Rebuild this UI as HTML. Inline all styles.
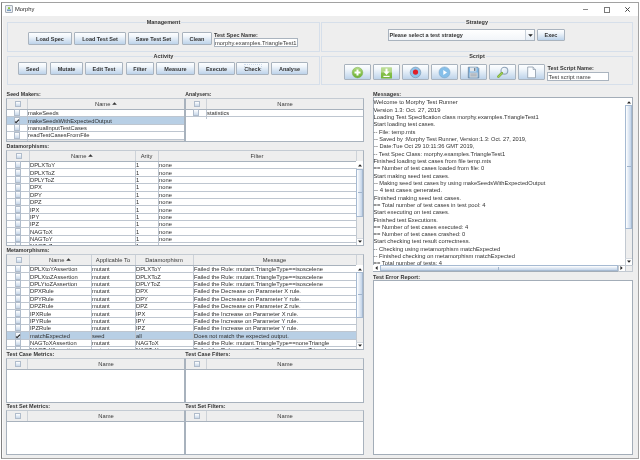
<!DOCTYPE html><html><head><meta charset="utf-8"><style>html,body{margin:0;padding:0;}body{width:640px;height:460px;overflow:hidden;background:#fff;position:relative;font-family:"Liberation Sans",sans-serif;}</style></head><body><div style="position:absolute;left:0;top:0;width:640px;height:460px;will-change:transform;">
<div style="position:absolute;left:1px;top:2px;width:636px;height:455px;border:1px solid #a2a2a2;border-left-color:#808080;background:#eeeeee;"></div>
<div style="position:absolute;left:2px;top:3px;width:636px;height:13px;background:#ffffff;"></div>
<div style="position:absolute;left:2px;top:16px;width:1px;height:441px;background:#fafafa;"></div>
<div style="position:absolute;left:5px;top:5px;width:6px;height:6px;border:1px solid #a5adb6;border-radius:1px;background:#e9edf1;"></div>
<svg style="position:absolute;left:6px;top:6px" width="6" height="6" viewBox="0 0 6 6"><path d="M2 1.2H4V3H2Z" fill="#8cc63e"/><path d="M1 3.4H5V5H1Z" fill="#7a9cc0"/></svg>
<div style="position:absolute;left:15px;top:5px;height:8px;line-height:8px;font-size:5.8px;color:#2a2a2a;white-space:nowrap;">Morphy</div>
<div style="position:absolute;left:583px;top:9px;width:5px;height:1px;background:#8a8a8a;"></div>
<div style="position:absolute;left:604px;top:7px;width:4px;height:4px;border:1px solid #7a7a7a;"></div>
<svg style="position:absolute;left:625px;top:7px" width="5" height="5" viewBox="0 0 5 5"><path d="M0.3 0.3L4.7 4.7M4.7 0.3L0.3 4.7" stroke="#444" stroke-width="1"/></svg>
<div style="position:absolute;left:7px;top:22px;width:311px;height:28px;border:1px solid #d6dfea;"></div>
<div style="position:absolute;left:63.5px;width:200px;top:18px;height:8px;line-height:8px;text-align:center;font-size:5.5px;font-weight:bold;color:#333333;white-space:nowrap;"><span style="background:#eeeeee;padding:0 1px;">Management</span></div>
<div style="position:absolute;left:321px;top:22px;width:310px;height:28px;border:1px solid #d6dfea;"></div>
<div style="position:absolute;left:377.0px;width:200px;top:18px;height:8px;line-height:8px;text-align:center;font-size:5.5px;font-weight:bold;color:#333333;white-space:nowrap;"><span style="background:#eeeeee;padding:0 1px;">Strategy</span></div>
<div style="position:absolute;left:7px;top:56px;width:311px;height:27px;border:1px solid #d6dfea;"></div>
<div style="position:absolute;left:63.5px;width:200px;top:52px;height:8px;line-height:8px;text-align:center;font-size:5.5px;font-weight:bold;color:#333333;white-space:nowrap;"><span style="background:#eeeeee;padding:0 1px;">Activity</span></div>
<div style="position:absolute;left:321px;top:56px;width:310px;height:27px;border:1px solid #d6dfea;"></div>
<div style="position:absolute;left:377.0px;width:200px;top:52px;height:8px;line-height:8px;text-align:center;font-size:5.5px;font-weight:bold;color:#333333;white-space:nowrap;"><span style="background:#eeeeee;padding:0 1px;">Script</span></div>
<div style="position:absolute;left:28px;top:32px;width:42px;height:11px;border:1px solid #a9b3be;border-radius:1px;background:linear-gradient(#fdfeff 0%,#f1f6fb 30%,#bdd3ea 100%);"></div>
<div style="position:absolute;left:-50.0px;width:200px;top:34.5px;height:8px;line-height:8px;text-align:center;font-size:5.5px;font-weight:bold;color:#333;white-space:nowrap;"><span style="">Load Spec</span></div>
<div style="position:absolute;left:74px;top:32px;width:50px;height:11px;border:1px solid #a9b3be;border-radius:1px;background:linear-gradient(#fdfeff 0%,#f1f6fb 30%,#bdd3ea 100%);"></div>
<div style="position:absolute;left:0.0px;width:200px;top:34.5px;height:8px;line-height:8px;text-align:center;font-size:5.5px;font-weight:bold;color:#333;white-space:nowrap;"><span style="">Load Test Set</span></div>
<div style="position:absolute;left:128px;top:32px;width:49px;height:11px;border:1px solid #a9b3be;border-radius:1px;background:linear-gradient(#fdfeff 0%,#f1f6fb 30%,#bdd3ea 100%);"></div>
<div style="position:absolute;left:53.5px;width:200px;top:34.5px;height:8px;line-height:8px;text-align:center;font-size:5.5px;font-weight:bold;color:#333;white-space:nowrap;"><span style="">Save Test Set</span></div>
<div style="position:absolute;left:182px;top:32px;width:28px;height:11px;border:1px solid #a9b3be;border-radius:1px;background:linear-gradient(#fdfeff 0%,#f1f6fb 30%,#bdd3ea 100%);"></div>
<div style="position:absolute;left:97.0px;width:200px;top:34.5px;height:8px;line-height:8px;text-align:center;font-size:5.5px;font-weight:bold;color:#333;white-space:nowrap;"><span style="">Clean</span></div>
<div style="position:absolute;left:214px;top:30.5px;height:8px;line-height:8px;font-size:5.5px;font-weight:bold;color:#333333;white-space:nowrap;">Test Spec Name:</div>
<div style="position:absolute;left:214px;top:38px;width:82px;height:7px;border:1px solid #aab4bf;background:#fff;"></div>
<div style="position:absolute;left:215px;top:38.7px;height:8px;line-height:8px;font-size:5.8px;color:#3a3a3a;white-space:nowrap;">morphy.examples.TriangleTest1</div>
<div style="position:absolute;left:388px;top:29px;width:145px;height:10px;border:1px solid #a9b3be;background:linear-gradient(#ffffff,#f2f5f9);"></div>
<div style="position:absolute;left:525px;top:30px;width:1px;height:10px;background:#c9d1da;"></div>
<div style="position:absolute;left:526px;top:30px;width:8px;height:10px;background:linear-gradient(#ffffff,#e4ecf5);"></div>
<svg style="position:absolute;left:527.5px;top:33.5px" width="5" height="3" viewBox="0 0 5 3"><path d="M0.2 0.2H4.8L2.5 2.8Z" fill="#222"/></svg>
<div style="position:absolute;left:389.5px;top:31px;height:8px;line-height:8px;font-size:5.5px;font-weight:bold;color:#333333;white-space:nowrap;">Please select a test strategy</div>
<div style="position:absolute;left:537px;top:29px;width:26px;height:10px;border:1px solid #a9b3be;border-radius:1px;background:linear-gradient(#fdfeff 0%,#f1f6fb 30%,#bdd3ea 100%);"></div>
<div style="position:absolute;left:451.0px;width:200px;top:31.0px;height:8px;line-height:8px;text-align:center;font-size:5.5px;font-weight:bold;color:#333;white-space:nowrap;"><span style="">Exec</span></div>
<div style="position:absolute;left:18px;top:62px;width:27px;height:11px;border:1px solid #a9b3be;border-radius:1px;background:linear-gradient(#fdfeff 0%,#f1f6fb 30%,#bdd3ea 100%);"></div>
<div style="position:absolute;left:-67.5px;width:200px;top:64.5px;height:8px;line-height:8px;text-align:center;font-size:5.5px;font-weight:bold;color:#333;white-space:nowrap;"><span style="">Seed</span></div>
<div style="position:absolute;left:50px;top:62px;width:31px;height:11px;border:1px solid #a9b3be;border-radius:1px;background:linear-gradient(#fdfeff 0%,#f1f6fb 30%,#bdd3ea 100%);"></div>
<div style="position:absolute;left:-33.5px;width:200px;top:64.5px;height:8px;line-height:8px;text-align:center;font-size:5.5px;font-weight:bold;color:#333;white-space:nowrap;"><span style="">Mutate</span></div>
<div style="position:absolute;left:85px;top:62px;width:36px;height:11px;border:1px solid #a9b3be;border-radius:1px;background:linear-gradient(#fdfeff 0%,#f1f6fb 30%,#bdd3ea 100%);"></div>
<div style="position:absolute;left:4.0px;width:200px;top:64.5px;height:8px;line-height:8px;text-align:center;font-size:5.5px;font-weight:bold;color:#333;white-space:nowrap;"><span style="">Edit Test</span></div>
<div style="position:absolute;left:126px;top:62px;width:26px;height:11px;border:1px solid #a9b3be;border-radius:1px;background:linear-gradient(#fdfeff 0%,#f1f6fb 30%,#bdd3ea 100%);"></div>
<div style="position:absolute;left:40.0px;width:200px;top:64.5px;height:8px;line-height:8px;text-align:center;font-size:5.5px;font-weight:bold;color:#333;white-space:nowrap;"><span style="">Filter</span></div>
<div style="position:absolute;left:156px;top:62px;width:37px;height:11px;border:1px solid #a9b3be;border-radius:1px;background:linear-gradient(#fdfeff 0%,#f1f6fb 30%,#bdd3ea 100%);"></div>
<div style="position:absolute;left:75.5px;width:200px;top:64.5px;height:8px;line-height:8px;text-align:center;font-size:5.5px;font-weight:bold;color:#333;white-space:nowrap;"><span style="">Measure</span></div>
<div style="position:absolute;left:198px;top:62px;width:35px;height:11px;border:1px solid #a9b3be;border-radius:1px;background:linear-gradient(#fdfeff 0%,#f1f6fb 30%,#bdd3ea 100%);"></div>
<div style="position:absolute;left:116.5px;width:200px;top:64.5px;height:8px;line-height:8px;text-align:center;font-size:5.5px;font-weight:bold;color:#333;white-space:nowrap;"><span style="">Execute</span></div>
<div style="position:absolute;left:236px;top:62px;width:31px;height:11px;border:1px solid #a9b3be;border-radius:1px;background:linear-gradient(#fdfeff 0%,#f1f6fb 30%,#bdd3ea 100%);"></div>
<div style="position:absolute;left:152.5px;width:200px;top:64.5px;height:8px;line-height:8px;text-align:center;font-size:5.5px;font-weight:bold;color:#333;white-space:nowrap;"><span style="">Check</span></div>
<div style="position:absolute;left:271px;top:62px;width:35px;height:11px;border:1px solid #a9b3be;border-radius:1px;background:linear-gradient(#fdfeff 0%,#f1f6fb 30%,#bdd3ea 100%);"></div>
<div style="position:absolute;left:189.5px;width:200px;top:64.5px;height:8px;line-height:8px;text-align:center;font-size:5.5px;font-weight:bold;color:#333;white-space:nowrap;"><span style="">Analyse</span></div>
<div style="position:absolute;left:244px;top:64px;width:16px;height:7px;border:1px dotted #cbd8e8;"></div>
<div style="position:absolute;left:344px;top:64px;width:25px;height:14px;border:1px solid #a9b3be;border-radius:1px;background:linear-gradient(#fdfeff 0%,#f1f6fb 30%,#bdd3ea 100%);"></div>
<div style="position:absolute;left:351px;top:64.6px;width:13px;height:13px;"><svg width="13" height="13" viewBox="0 0 13 13"><defs><linearGradient id="g1" x1="0" y1="0" x2="0" y2="1"><stop offset="0" stop-color="#b9dd8f"/><stop offset="0.45" stop-color="#8cc552"/><stop offset="1" stop-color="#6fb03a"/></linearGradient></defs><circle cx="6.5" cy="6.6" r="5.3" fill="url(#g1)" stroke="#79ad4a" stroke-width="0.5"/><path d="M6.5 3.6V9.6M3.5 6.6H9.5" stroke="#fff" stroke-width="2"/></svg></div>
<div style="position:absolute;left:373px;top:64px;width:25px;height:14px;border:1px solid #a9b3be;border-radius:1px;background:linear-gradient(#fdfeff 0%,#f1f6fb 30%,#bdd3ea 100%);"></div>
<div style="position:absolute;left:380px;top:64.6px;width:13px;height:13px;"><svg width="13" height="13" viewBox="0 0 13 13"><defs><linearGradient id="g2" x1="0" y1="0" x2="0" y2="1"><stop offset="0" stop-color="#bcdd98"/><stop offset="0.45" stop-color="#b0d685"/><stop offset="0.5" stop-color="#86c04a"/><stop offset="1" stop-color="#78b63c"/></linearGradient></defs><rect x="1" y="1.2" width="11" height="11.3" rx="0.6" fill="url(#g2)"/><path d="M6.5 2.6V6.5" stroke="#fff" stroke-width="2"/><path d="M3.4 5.6H9.6L6.5 8.9Z" fill="#fff"/><path d="M3.4 10.4H9.6" stroke="#fff" stroke-width="1.2"/></svg></div>
<div style="position:absolute;left:402px;top:64px;width:25px;height:14px;border:1px solid #a9b3be;border-radius:1px;background:linear-gradient(#fdfeff 0%,#f1f6fb 30%,#bdd3ea 100%);"></div>
<div style="position:absolute;left:409px;top:64.6px;width:13px;height:13px;"><svg width="13" height="13" viewBox="0 0 13 13"><circle cx="6.5" cy="6.4" r="5.3" fill="#8fc3ea" stroke="#7d98b3" stroke-width="0.7"/><circle cx="6.5" cy="6.1" r="2.6" fill="#e0202a"/></svg></div>
<div style="position:absolute;left:431px;top:64px;width:25px;height:14px;border:1px solid #a9b3be;border-radius:1px;background:linear-gradient(#fdfeff 0%,#f1f6fb 30%,#bdd3ea 100%);"></div>
<div style="position:absolute;left:438px;top:64.6px;width:13px;height:13px;"><svg width="13" height="13" viewBox="0 0 13 13"><circle cx="6.5" cy="6.4" r="5.5" fill="#86bfe9" stroke="#7fa6c8" stroke-width="0.6"/><path d="M5.3 3.9L9 6.4L5.3 8.9Z" fill="#fff"/></svg></div>
<div style="position:absolute;left:460px;top:64px;width:25px;height:14px;border:1px solid #a9b3be;border-radius:1px;background:linear-gradient(#fdfeff 0%,#f1f6fb 30%,#bdd3ea 100%);"></div>
<div style="position:absolute;left:467px;top:64.6px;width:13px;height:13px;"><svg width="13" height="13" viewBox="0 0 13 13"><path d="M1.3 1.2H10.6L11.8 2.4V11.9H1.3Z" fill="#7db6e6" stroke="#64788e" stroke-width="0.7"/><rect x="3" y="1.5" width="6.4" height="4" fill="#e4e8ec"/><rect x="7" y="2.1" width="1.4" height="2.8" fill="#6c7c8c"/><rect x="2.6" y="6.5" width="8" height="5.1" fill="#cdd2d7"/><path d="M3.5 8.1H9.7M3.5 9.8H9.7" stroke="#959ea7" stroke-width="0.7"/></svg></div>
<div style="position:absolute;left:489px;top:64px;width:25px;height:14px;border:1px solid #a9b3be;border-radius:1px;background:linear-gradient(#fdfeff 0%,#f1f6fb 30%,#bdd3ea 100%);"></div>
<div style="position:absolute;left:496px;top:64.6px;width:13px;height:13px;"><svg width="13" height="13" viewBox="0 0 13 13"><defs><linearGradient id="g3" x1="0" y1="0" x2="1" y2="1"><stop offset="0" stop-color="#ffffff"/><stop offset="1" stop-color="#c9ddf0"/></linearGradient></defs><circle cx="8.4" cy="4.7" r="3.4" fill="url(#g3)" stroke="#8fa3b8" stroke-width="1.1"/><path d="M5.9 7.2L2.4 10.7" stroke="#6f9a3a" stroke-width="2.6" stroke-linecap="round"/><path d="M5.9 7.2L2.4 10.7" stroke="#9fd052" stroke-width="1.6" stroke-linecap="round"/></svg></div>
<div style="position:absolute;left:518px;top:64px;width:25px;height:14px;border:1px solid #a9b3be;border-radius:1px;background:linear-gradient(#fdfeff 0%,#f1f6fb 30%,#bdd3ea 100%);"></div>
<div style="position:absolute;left:525px;top:64.6px;width:13px;height:13px;"><svg width="13" height="13" viewBox="0 0 13 13"><path d="M2.7 1H8.1L10.5 3.5V11.8H2.7Z" fill="#fbfdff" stroke="#8d9aa9" stroke-width="0.8"/><path d="M8.1 1V3.5H10.5" fill="#dfe6ee" stroke="#8d9aa9" stroke-width="0.7"/></svg></div>
<div style="position:absolute;left:547.5px;top:63.8px;height:8px;line-height:8px;font-size:5.5px;font-weight:bold;color:#333333;white-space:nowrap;">Test Script Name:</div>
<div style="position:absolute;left:547px;top:72px;width:60px;height:7px;border:1px solid #aab4bf;background:#fff;"></div>
<div style="position:absolute;left:548.5px;top:72.6px;height:8px;line-height:8px;font-size:5.8px;color:#3a3a3a;white-space:nowrap;">Test script name</div>
<div style="position:absolute;left:6.6px;top:90px;height:8px;line-height:8px;font-size:5.32px;font-weight:bold;color:#333333;white-space:nowrap;">Seed Makers:</div>
<div style="position:absolute;left:6px;top:98px;width:177px;height:42px;border:1px solid #a8b2bd;border-top-color:#c4cbd3;background:#e4e4e4;overflow:hidden;">
<div style="position:absolute;left:0px;top:0px;width:177px;height:10px;background:#eeeeee;"></div>
<div style="position:absolute;left:0px;top:10px;width:177px;height:1px;background:#a8b2bd;"></div>
<div style="position:absolute;left:0px;top:11.1px;width:177px;height:7.35px;background:#fff;"></div>
<div style="position:absolute;left:0px;top:17px;width:177px;height:1px;background:#bec6d0;"></div>
<div style="position:absolute;left:0px;top:18.45px;width:177px;height:7.35px;background:#b8cfe5;"></div>
<div style="position:absolute;left:0px;top:25px;width:177px;height:1px;background:#bec6d0;"></div>
<div style="position:absolute;left:0px;top:25.799999999999997px;width:177px;height:7.35px;background:#fff;"></div>
<div style="position:absolute;left:0px;top:32px;width:177px;height:1px;background:#bec6d0;"></div>
<div style="position:absolute;left:0px;top:33.15px;width:177px;height:7.35px;background:#fff;"></div>
<div style="position:absolute;left:0px;top:40px;width:177px;height:1px;background:#bec6d0;"></div>
<div style="position:absolute;left:20px;top:0px;width:1px;height:10px;background:#cdd2d8;"></div>
<div style="position:absolute;left:20px;top:11px;width:1px;height:30.799999999999997px;background:#bec6d0;"></div>
<div style="position:absolute;left:8px;top:2px;width:4px;height:4px;border:1px solid #b0bccb;background:linear-gradient(#ffffff,#c8d8ea);"></div>
<div style="position:absolute;left:-1.0px;width:200px;top:1.0px;height:8px;line-height:8px;text-align:center;font-size:5.8px;color:#383838;white-space:nowrap;"><span style="">Name&nbsp;<svg width="5" height="3" viewBox="0 0 5 3" style="vertical-align:1.2px"><path d="M0.2 2.8H4.8L2.5 0.3Z" fill="#333"/></svg></span></div>
<div style="position:absolute;left:7px;top:10px;width:4px;height:5px;border:1px solid #b0bccb;background:linear-gradient(#ffffff,#c8d8ea);"></div>
<div style="position:absolute;left:21px;top:10.4px;height:8px;line-height:8px;font-size:5.8px;color:#2e2e2e;white-space:nowrap;">makeSeeds</div>
<div style="position:absolute;left:7px;top:18px;width:4px;height:5px;border:1px solid #b0bccb;background:linear-gradient(#ffffff,#c8d8ea);"></div>
<svg style="position:absolute;left:7px;top:18px" width="6" height="7" viewBox="0 0 6 7"><path d="M1 4.6 L2.1 5.6 L5 2.6" stroke="#1a1a1a" stroke-width="1.1" fill="none"/></svg>
<div style="position:absolute;left:21px;top:17.75px;height:8px;line-height:8px;font-size:5.8px;color:#2e2e2e;white-space:nowrap;">makeSeedsWithExpectedOutput</div>
<div style="position:absolute;left:7px;top:25px;width:4px;height:5px;border:1px solid #b0bccb;background:linear-gradient(#ffffff,#c8d8ea);"></div>
<div style="position:absolute;left:21px;top:25.099999999999998px;height:8px;line-height:8px;font-size:5.8px;color:#2e2e2e;white-space:nowrap;">manualInputTestCases</div>
<div style="position:absolute;left:7px;top:33px;width:4px;height:5px;border:1px solid #b0bccb;background:linear-gradient(#ffffff,#c8d8ea);"></div>
<div style="position:absolute;left:21px;top:32.449999999999996px;height:8px;line-height:8px;font-size:5.8px;color:#2e2e2e;white-space:nowrap;">readTestCasesFromFile</div>
</div>
<div style="position:absolute;left:185.3px;top:90px;height:8px;line-height:8px;font-size:5.15px;font-weight:bold;color:#333333;white-space:nowrap;">Analysers:</div>
<div style="position:absolute;left:185px;top:98px;width:177px;height:42px;border:1px solid #a8b2bd;border-top-color:#c4cbd3;background:#fff;overflow:hidden;">
<div style="position:absolute;left:0px;top:0px;width:177px;height:10px;background:#eeeeee;"></div>
<div style="position:absolute;left:0px;top:10px;width:177px;height:1px;background:#a8b2bd;"></div>
<div style="position:absolute;left:0px;top:11.1px;width:177px;height:7.35px;background:#fff;"></div>
<div style="position:absolute;left:0px;top:17px;width:177px;height:1px;background:#bec6d0;"></div>
<div style="position:absolute;left:20px;top:0px;width:1px;height:10px;background:#cdd2d8;"></div>
<div style="position:absolute;left:20px;top:11px;width:1px;height:8.75px;background:#bec6d0;"></div>
<div style="position:absolute;left:8px;top:2px;width:4px;height:4px;border:1px solid #b0bccb;background:linear-gradient(#ffffff,#c8d8ea);"></div>
<div style="position:absolute;left:-1.0px;width:200px;top:1.0px;height:8px;line-height:8px;text-align:center;font-size:5.8px;color:#383838;white-space:nowrap;"><span style="">Name</span></div>
<div style="position:absolute;left:7px;top:10px;width:4px;height:5px;border:1px solid #b0bccb;background:linear-gradient(#ffffff,#c8d8ea);"></div>
<div style="position:absolute;left:21px;top:10.4px;height:8px;line-height:8px;font-size:5.8px;color:#2e2e2e;white-space:nowrap;">statistics</div>
</div>
<div style="position:absolute;left:6.6px;top:142px;height:8px;line-height:8px;font-size:5.39px;font-weight:bold;color:#333333;white-space:nowrap;">Datamorphisms:</div>
<div style="position:absolute;left:6px;top:150px;width:356px;height:94px;border:1px solid #a8b2bd;border-top-color:#c4cbd3;background:#fff;overflow:hidden;">
<div style="position:absolute;left:0px;top:0px;width:356px;height:10px;background:#eeeeee;"></div>
<div style="position:absolute;left:0px;top:10px;width:356px;height:1px;background:#a8b2bd;"></div>
<div style="position:absolute;left:0px;top:11.1px;width:349px;height:7.35px;background:#fff;"></div>
<div style="position:absolute;left:0px;top:17px;width:349px;height:1px;background:#bec6d0;"></div>
<div style="position:absolute;left:0px;top:18.45px;width:349px;height:7.35px;background:#fff;"></div>
<div style="position:absolute;left:0px;top:25px;width:349px;height:1px;background:#bec6d0;"></div>
<div style="position:absolute;left:0px;top:25.799999999999997px;width:349px;height:7.35px;background:#fff;"></div>
<div style="position:absolute;left:0px;top:32px;width:349px;height:1px;background:#bec6d0;"></div>
<div style="position:absolute;left:0px;top:33.15px;width:349px;height:7.35px;background:#fff;"></div>
<div style="position:absolute;left:0px;top:40px;width:349px;height:1px;background:#bec6d0;"></div>
<div style="position:absolute;left:0px;top:40.5px;width:349px;height:7.35px;background:#fff;"></div>
<div style="position:absolute;left:0px;top:47px;width:349px;height:1px;background:#bec6d0;"></div>
<div style="position:absolute;left:0px;top:47.85px;width:349px;height:7.35px;background:#fff;"></div>
<div style="position:absolute;left:0px;top:54px;width:349px;height:1px;background:#bec6d0;"></div>
<div style="position:absolute;left:0px;top:55.199999999999996px;width:349px;height:7.35px;background:#fff;"></div>
<div style="position:absolute;left:0px;top:62px;width:349px;height:1px;background:#bec6d0;"></div>
<div style="position:absolute;left:0px;top:62.55px;width:349px;height:7.35px;background:#fff;"></div>
<div style="position:absolute;left:0px;top:69px;width:349px;height:1px;background:#bec6d0;"></div>
<div style="position:absolute;left:0px;top:69.89999999999999px;width:349px;height:7.35px;background:#fff;"></div>
<div style="position:absolute;left:0px;top:76px;width:349px;height:1px;background:#bec6d0;"></div>
<div style="position:absolute;left:0px;top:77.24999999999999px;width:349px;height:7.35px;background:#fff;"></div>
<div style="position:absolute;left:0px;top:84px;width:349px;height:1px;background:#bec6d0;"></div>
<div style="position:absolute;left:0px;top:84.6px;width:349px;height:7.35px;background:#fff;"></div>
<div style="position:absolute;left:0px;top:91px;width:349px;height:1px;background:#bec6d0;"></div>
<div style="position:absolute;left:0px;top:91.94999999999999px;width:349px;height:7.35px;background:#fff;"></div>
<div style="position:absolute;left:0px;top:98px;width:349px;height:1px;background:#bec6d0;"></div>
<div style="position:absolute;left:22px;top:0px;width:1px;height:10px;background:#cdd2d8;"></div>
<div style="position:absolute;left:22px;top:11px;width:1px;height:89.6px;background:#bec6d0;"></div>
<div style="position:absolute;left:9px;top:2px;width:4px;height:4px;border:1px solid #b0bccb;background:linear-gradient(#ffffff,#c8d8ea);"></div>
<div style="position:absolute;left:128px;top:0px;width:1px;height:10px;background:#cdd2d8;"></div>
<div style="position:absolute;left:128px;top:11px;width:1px;height:89.6px;background:#bec6d0;"></div>
<div style="position:absolute;left:-25.0px;width:200px;top:1.0px;height:8px;line-height:8px;text-align:center;font-size:5.8px;color:#383838;white-space:nowrap;"><span style="">Name&nbsp;<svg width="5" height="3" viewBox="0 0 5 3" style="vertical-align:1.2px"><path d="M0.2 2.8H4.8L2.5 0.3Z" fill="#333"/></svg></span></div>
<div style="position:absolute;left:151px;top:0px;width:1px;height:10px;background:#cdd2d8;"></div>
<div style="position:absolute;left:151px;top:11px;width:1px;height:89.6px;background:#bec6d0;"></div>
<div style="position:absolute;left:39.5px;width:200px;top:1.0px;height:8px;line-height:8px;text-align:center;font-size:5.8px;color:#383838;white-space:nowrap;"><span style="">Arity</span></div>
<div style="position:absolute;left:349px;top:0px;width:1px;height:10px;background:#cdd2d8;"></div>
<div style="position:absolute;left:349px;top:11px;width:1px;height:89.6px;background:#bec6d0;"></div>
<div style="position:absolute;left:150.0px;width:200px;top:1.0px;height:8px;line-height:8px;text-align:center;font-size:5.8px;color:#383838;white-space:nowrap;"><span style="">Filter</span></div>
<div style="position:absolute;left:8px;top:10px;width:4px;height:5px;border:1px solid #b0bccb;background:linear-gradient(#ffffff,#c8d8ea);"></div>
<div style="position:absolute;left:23px;top:10.4px;height:8px;line-height:8px;font-size:5.8px;color:#2e2e2e;white-space:nowrap;">DPLXToY</div>
<div style="position:absolute;left:129px;top:10.4px;height:8px;line-height:8px;font-size:5.8px;color:#2e2e2e;white-space:nowrap;">1</div>
<div style="position:absolute;left:152px;top:10.4px;height:8px;line-height:8px;font-size:5.8px;color:#2e2e2e;white-space:nowrap;">none</div>
<div style="position:absolute;left:8px;top:18px;width:4px;height:5px;border:1px solid #b0bccb;background:linear-gradient(#ffffff,#c8d8ea);"></div>
<div style="position:absolute;left:23px;top:17.75px;height:8px;line-height:8px;font-size:5.8px;color:#2e2e2e;white-space:nowrap;">DPLXToZ</div>
<div style="position:absolute;left:129px;top:17.75px;height:8px;line-height:8px;font-size:5.8px;color:#2e2e2e;white-space:nowrap;">1</div>
<div style="position:absolute;left:152px;top:17.75px;height:8px;line-height:8px;font-size:5.8px;color:#2e2e2e;white-space:nowrap;">none</div>
<div style="position:absolute;left:8px;top:25px;width:4px;height:5px;border:1px solid #b0bccb;background:linear-gradient(#ffffff,#c8d8ea);"></div>
<div style="position:absolute;left:23px;top:25.099999999999998px;height:8px;line-height:8px;font-size:5.8px;color:#2e2e2e;white-space:nowrap;">DPLYToZ</div>
<div style="position:absolute;left:129px;top:25.099999999999998px;height:8px;line-height:8px;font-size:5.8px;color:#2e2e2e;white-space:nowrap;">1</div>
<div style="position:absolute;left:152px;top:25.099999999999998px;height:8px;line-height:8px;font-size:5.8px;color:#2e2e2e;white-space:nowrap;">none</div>
<div style="position:absolute;left:8px;top:33px;width:4px;height:5px;border:1px solid #b0bccb;background:linear-gradient(#ffffff,#c8d8ea);"></div>
<div style="position:absolute;left:23px;top:32.449999999999996px;height:8px;line-height:8px;font-size:5.8px;color:#2e2e2e;white-space:nowrap;">DPX</div>
<div style="position:absolute;left:129px;top:32.449999999999996px;height:8px;line-height:8px;font-size:5.8px;color:#2e2e2e;white-space:nowrap;">1</div>
<div style="position:absolute;left:152px;top:32.449999999999996px;height:8px;line-height:8px;font-size:5.8px;color:#2e2e2e;white-space:nowrap;">none</div>
<div style="position:absolute;left:8px;top:40px;width:4px;height:5px;border:1px solid #b0bccb;background:linear-gradient(#ffffff,#c8d8ea);"></div>
<div style="position:absolute;left:23px;top:39.8px;height:8px;line-height:8px;font-size:5.8px;color:#2e2e2e;white-space:nowrap;">DPY</div>
<div style="position:absolute;left:129px;top:39.8px;height:8px;line-height:8px;font-size:5.8px;color:#2e2e2e;white-space:nowrap;">1</div>
<div style="position:absolute;left:152px;top:39.8px;height:8px;line-height:8px;font-size:5.8px;color:#2e2e2e;white-space:nowrap;">none</div>
<div style="position:absolute;left:8px;top:47px;width:4px;height:5px;border:1px solid #b0bccb;background:linear-gradient(#ffffff,#c8d8ea);"></div>
<div style="position:absolute;left:23px;top:47.15px;height:8px;line-height:8px;font-size:5.8px;color:#2e2e2e;white-space:nowrap;">DPZ</div>
<div style="position:absolute;left:129px;top:47.15px;height:8px;line-height:8px;font-size:5.8px;color:#2e2e2e;white-space:nowrap;">1</div>
<div style="position:absolute;left:152px;top:47.15px;height:8px;line-height:8px;font-size:5.8px;color:#2e2e2e;white-space:nowrap;">none</div>
<div style="position:absolute;left:8px;top:55px;width:4px;height:5px;border:1px solid #b0bccb;background:linear-gradient(#ffffff,#c8d8ea);"></div>
<div style="position:absolute;left:23px;top:54.49999999999999px;height:8px;line-height:8px;font-size:5.8px;color:#2e2e2e;white-space:nowrap;">IPX</div>
<div style="position:absolute;left:129px;top:54.49999999999999px;height:8px;line-height:8px;font-size:5.8px;color:#2e2e2e;white-space:nowrap;">1</div>
<div style="position:absolute;left:152px;top:54.49999999999999px;height:8px;line-height:8px;font-size:5.8px;color:#2e2e2e;white-space:nowrap;">none</div>
<div style="position:absolute;left:8px;top:62px;width:4px;height:5px;border:1px solid #b0bccb;background:linear-gradient(#ffffff,#c8d8ea);"></div>
<div style="position:absolute;left:23px;top:61.849999999999994px;height:8px;line-height:8px;font-size:5.8px;color:#2e2e2e;white-space:nowrap;">IPY</div>
<div style="position:absolute;left:129px;top:61.849999999999994px;height:8px;line-height:8px;font-size:5.8px;color:#2e2e2e;white-space:nowrap;">1</div>
<div style="position:absolute;left:152px;top:61.849999999999994px;height:8px;line-height:8px;font-size:5.8px;color:#2e2e2e;white-space:nowrap;">none</div>
<div style="position:absolute;left:8px;top:69px;width:4px;height:5px;border:1px solid #b0bccb;background:linear-gradient(#ffffff,#c8d8ea);"></div>
<div style="position:absolute;left:23px;top:69.19999999999999px;height:8px;line-height:8px;font-size:5.8px;color:#2e2e2e;white-space:nowrap;">IPZ</div>
<div style="position:absolute;left:129px;top:69.19999999999999px;height:8px;line-height:8px;font-size:5.8px;color:#2e2e2e;white-space:nowrap;">1</div>
<div style="position:absolute;left:152px;top:69.19999999999999px;height:8px;line-height:8px;font-size:5.8px;color:#2e2e2e;white-space:nowrap;">none</div>
<div style="position:absolute;left:8px;top:77px;width:4px;height:5px;border:1px solid #b0bccb;background:linear-gradient(#ffffff,#c8d8ea);"></div>
<div style="position:absolute;left:23px;top:76.54999999999998px;height:8px;line-height:8px;font-size:5.8px;color:#2e2e2e;white-space:nowrap;">NAGToX</div>
<div style="position:absolute;left:129px;top:76.54999999999998px;height:8px;line-height:8px;font-size:5.8px;color:#2e2e2e;white-space:nowrap;">1</div>
<div style="position:absolute;left:152px;top:76.54999999999998px;height:8px;line-height:8px;font-size:5.8px;color:#2e2e2e;white-space:nowrap;">none</div>
<div style="position:absolute;left:8px;top:84px;width:4px;height:5px;border:1px solid #b0bccb;background:linear-gradient(#ffffff,#c8d8ea);"></div>
<div style="position:absolute;left:23px;top:83.89999999999999px;height:8px;line-height:8px;font-size:5.8px;color:#2e2e2e;white-space:nowrap;">NAGToY</div>
<div style="position:absolute;left:129px;top:83.89999999999999px;height:8px;line-height:8px;font-size:5.8px;color:#2e2e2e;white-space:nowrap;">1</div>
<div style="position:absolute;left:152px;top:83.89999999999999px;height:8px;line-height:8px;font-size:5.8px;color:#2e2e2e;white-space:nowrap;">none</div>
<div style="position:absolute;left:8px;top:91px;width:4px;height:5px;border:1px solid #b0bccb;background:linear-gradient(#ffffff,#c8d8ea);"></div>
<div style="position:absolute;left:23px;top:91.24999999999999px;height:8px;line-height:8px;font-size:5.8px;color:#2e2e2e;white-space:nowrap;">NAGToZ</div>
<div style="position:absolute;left:129px;top:91.24999999999999px;height:8px;line-height:8px;font-size:5.8px;color:#2e2e2e;white-space:nowrap;">1</div>
<div style="position:absolute;left:152px;top:91.24999999999999px;height:8px;line-height:8px;font-size:5.8px;color:#2e2e2e;white-space:nowrap;">none</div>
</div>
<div style="position:absolute;left:6.6px;top:246px;height:8px;line-height:8px;font-size:5.37px;font-weight:bold;color:#333333;white-space:nowrap;">Metamorphisms:</div>
<div style="position:absolute;left:6px;top:254px;width:356px;height:94px;border:1px solid #a8b2bd;border-top-color:#c4cbd3;background:#fff;overflow:hidden;">
<div style="position:absolute;left:0px;top:0px;width:356px;height:10px;background:#eeeeee;"></div>
<div style="position:absolute;left:0px;top:10px;width:356px;height:1px;background:#a8b2bd;"></div>
<div style="position:absolute;left:0px;top:11.1px;width:349px;height:7.35px;background:#fff;"></div>
<div style="position:absolute;left:0px;top:17px;width:349px;height:1px;background:#bec6d0;"></div>
<div style="position:absolute;left:0px;top:18.45px;width:349px;height:7.35px;background:#fff;"></div>
<div style="position:absolute;left:0px;top:25px;width:349px;height:1px;background:#bec6d0;"></div>
<div style="position:absolute;left:0px;top:25.799999999999997px;width:349px;height:7.35px;background:#fff;"></div>
<div style="position:absolute;left:0px;top:32px;width:349px;height:1px;background:#bec6d0;"></div>
<div style="position:absolute;left:0px;top:33.15px;width:349px;height:7.35px;background:#fff;"></div>
<div style="position:absolute;left:0px;top:40px;width:349px;height:1px;background:#bec6d0;"></div>
<div style="position:absolute;left:0px;top:40.5px;width:349px;height:7.35px;background:#fff;"></div>
<div style="position:absolute;left:0px;top:47px;width:349px;height:1px;background:#bec6d0;"></div>
<div style="position:absolute;left:0px;top:47.85px;width:349px;height:7.35px;background:#fff;"></div>
<div style="position:absolute;left:0px;top:54px;width:349px;height:1px;background:#bec6d0;"></div>
<div style="position:absolute;left:0px;top:55.199999999999996px;width:349px;height:7.35px;background:#fff;"></div>
<div style="position:absolute;left:0px;top:62px;width:349px;height:1px;background:#bec6d0;"></div>
<div style="position:absolute;left:0px;top:62.55px;width:349px;height:7.35px;background:#fff;"></div>
<div style="position:absolute;left:0px;top:69px;width:349px;height:1px;background:#bec6d0;"></div>
<div style="position:absolute;left:0px;top:69.89999999999999px;width:349px;height:7.35px;background:#fff;"></div>
<div style="position:absolute;left:0px;top:76px;width:349px;height:1px;background:#bec6d0;"></div>
<div style="position:absolute;left:0px;top:77.24999999999999px;width:349px;height:7.35px;background:#b8cfe5;"></div>
<div style="position:absolute;left:0px;top:84px;width:349px;height:1px;background:#bec6d0;"></div>
<div style="position:absolute;left:0px;top:84.6px;width:349px;height:7.35px;background:#fff;"></div>
<div style="position:absolute;left:0px;top:91px;width:349px;height:1px;background:#bec6d0;"></div>
<div style="position:absolute;left:0px;top:91.94999999999999px;width:349px;height:7.35px;background:#fff;"></div>
<div style="position:absolute;left:0px;top:98px;width:349px;height:1px;background:#bec6d0;"></div>
<div style="position:absolute;left:22px;top:0px;width:1px;height:10px;background:#cdd2d8;"></div>
<div style="position:absolute;left:22px;top:11px;width:1px;height:89.6px;background:#bec6d0;"></div>
<div style="position:absolute;left:9px;top:2px;width:4px;height:4px;border:1px solid #b0bccb;background:linear-gradient(#ffffff,#c8d8ea);"></div>
<div style="position:absolute;left:84px;top:0px;width:1px;height:10px;background:#cdd2d8;"></div>
<div style="position:absolute;left:84px;top:11px;width:1px;height:89.6px;background:#bec6d0;"></div>
<div style="position:absolute;left:-47.0px;width:200px;top:1.0px;height:8px;line-height:8px;text-align:center;font-size:5.8px;color:#383838;white-space:nowrap;"><span style="">Name&nbsp;<svg width="5" height="3" viewBox="0 0 5 3" style="vertical-align:1.2px"><path d="M0.2 2.8H4.8L2.5 0.3Z" fill="#333"/></svg></span></div>
<div style="position:absolute;left:128px;top:0px;width:1px;height:10px;background:#cdd2d8;"></div>
<div style="position:absolute;left:128px;top:11px;width:1px;height:89.6px;background:#bec6d0;"></div>
<div style="position:absolute;left:6.0px;width:200px;top:1.0px;height:8px;line-height:8px;text-align:center;font-size:5.8px;color:#383838;white-space:nowrap;"><span style="">Applicable To</span></div>
<div style="position:absolute;left:186px;top:0px;width:1px;height:10px;background:#cdd2d8;"></div>
<div style="position:absolute;left:186px;top:11px;width:1px;height:89.6px;background:#bec6d0;"></div>
<div style="position:absolute;left:57.0px;width:200px;top:1.0px;height:8px;line-height:8px;text-align:center;font-size:5.8px;color:#383838;white-space:nowrap;"><span style="">Datamorphism</span></div>
<div style="position:absolute;left:349px;top:0px;width:1px;height:10px;background:#cdd2d8;"></div>
<div style="position:absolute;left:349px;top:11px;width:1px;height:89.6px;background:#bec6d0;"></div>
<div style="position:absolute;left:167.5px;width:200px;top:1.0px;height:8px;line-height:8px;text-align:center;font-size:5.8px;color:#383838;white-space:nowrap;"><span style="">Message</span></div>
<div style="position:absolute;left:8px;top:10px;width:4px;height:5px;border:1px solid #b0bccb;background:linear-gradient(#ffffff,#c8d8ea);"></div>
<div style="position:absolute;left:23px;top:10.4px;height:8px;line-height:8px;font-size:5.8px;color:#2e2e2e;white-space:nowrap;">DPLXtoYAssertion</div>
<div style="position:absolute;left:85px;top:10.4px;height:8px;line-height:8px;font-size:5.8px;color:#2e2e2e;white-space:nowrap;">mutant</div>
<div style="position:absolute;left:129px;top:10.4px;height:8px;line-height:8px;font-size:5.8px;color:#2e2e2e;white-space:nowrap;">DPLXToY</div>
<div style="position:absolute;left:187px;top:10.4px;height:8px;line-height:8px;font-size:5.8px;color:#2e2e2e;white-space:nowrap;">Failed the Rule: mutant.TriangleType==isoscelene</div>
<div style="position:absolute;left:8px;top:18px;width:4px;height:5px;border:1px solid #b0bccb;background:linear-gradient(#ffffff,#c8d8ea);"></div>
<div style="position:absolute;left:23px;top:17.75px;height:8px;line-height:8px;font-size:5.8px;color:#2e2e2e;white-space:nowrap;">DPLXtoZAssertion</div>
<div style="position:absolute;left:85px;top:17.75px;height:8px;line-height:8px;font-size:5.8px;color:#2e2e2e;white-space:nowrap;">mutant</div>
<div style="position:absolute;left:129px;top:17.75px;height:8px;line-height:8px;font-size:5.8px;color:#2e2e2e;white-space:nowrap;">DPLXToZ</div>
<div style="position:absolute;left:187px;top:17.75px;height:8px;line-height:8px;font-size:5.8px;color:#2e2e2e;white-space:nowrap;">Failed the Rule: mutant.TriangleType==isoscelene</div>
<div style="position:absolute;left:8px;top:25px;width:4px;height:5px;border:1px solid #b0bccb;background:linear-gradient(#ffffff,#c8d8ea);"></div>
<div style="position:absolute;left:23px;top:25.099999999999998px;height:8px;line-height:8px;font-size:5.8px;color:#2e2e2e;white-space:nowrap;">DPLYtoZAssertion</div>
<div style="position:absolute;left:85px;top:25.099999999999998px;height:8px;line-height:8px;font-size:5.8px;color:#2e2e2e;white-space:nowrap;">mutant</div>
<div style="position:absolute;left:129px;top:25.099999999999998px;height:8px;line-height:8px;font-size:5.8px;color:#2e2e2e;white-space:nowrap;">DPLYToZ</div>
<div style="position:absolute;left:187px;top:25.099999999999998px;height:8px;line-height:8px;font-size:5.8px;color:#2e2e2e;white-space:nowrap;">Failed the Rule: mutant.TriangleType==isoscelene</div>
<div style="position:absolute;left:8px;top:33px;width:4px;height:5px;border:1px solid #b0bccb;background:linear-gradient(#ffffff,#c8d8ea);"></div>
<div style="position:absolute;left:23px;top:32.449999999999996px;height:8px;line-height:8px;font-size:5.8px;color:#2e2e2e;white-space:nowrap;">DPXRule</div>
<div style="position:absolute;left:85px;top:32.449999999999996px;height:8px;line-height:8px;font-size:5.8px;color:#2e2e2e;white-space:nowrap;">mutant</div>
<div style="position:absolute;left:129px;top:32.449999999999996px;height:8px;line-height:8px;font-size:5.8px;color:#2e2e2e;white-space:nowrap;">DPX</div>
<div style="position:absolute;left:187px;top:32.449999999999996px;height:8px;line-height:8px;font-size:5.8px;color:#2e2e2e;white-space:nowrap;">Failed the Decrease on Parameter X rule.</div>
<div style="position:absolute;left:8px;top:40px;width:4px;height:5px;border:1px solid #b0bccb;background:linear-gradient(#ffffff,#c8d8ea);"></div>
<div style="position:absolute;left:23px;top:39.8px;height:8px;line-height:8px;font-size:5.8px;color:#2e2e2e;white-space:nowrap;">DPYRule</div>
<div style="position:absolute;left:85px;top:39.8px;height:8px;line-height:8px;font-size:5.8px;color:#2e2e2e;white-space:nowrap;">mutant</div>
<div style="position:absolute;left:129px;top:39.8px;height:8px;line-height:8px;font-size:5.8px;color:#2e2e2e;white-space:nowrap;">DPY</div>
<div style="position:absolute;left:187px;top:39.8px;height:8px;line-height:8px;font-size:5.8px;color:#2e2e2e;white-space:nowrap;">Failed the Decrease on Parameter Y rule.</div>
<div style="position:absolute;left:8px;top:47px;width:4px;height:5px;border:1px solid #b0bccb;background:linear-gradient(#ffffff,#c8d8ea);"></div>
<div style="position:absolute;left:23px;top:47.15px;height:8px;line-height:8px;font-size:5.8px;color:#2e2e2e;white-space:nowrap;">DPZRule</div>
<div style="position:absolute;left:85px;top:47.15px;height:8px;line-height:8px;font-size:5.8px;color:#2e2e2e;white-space:nowrap;">mutant</div>
<div style="position:absolute;left:129px;top:47.15px;height:8px;line-height:8px;font-size:5.8px;color:#2e2e2e;white-space:nowrap;">DPZ</div>
<div style="position:absolute;left:187px;top:47.15px;height:8px;line-height:8px;font-size:5.8px;color:#2e2e2e;white-space:nowrap;">Failed the Decrease on Parameter Z rule.</div>
<div style="position:absolute;left:8px;top:55px;width:4px;height:5px;border:1px solid #b0bccb;background:linear-gradient(#ffffff,#c8d8ea);"></div>
<div style="position:absolute;left:23px;top:54.49999999999999px;height:8px;line-height:8px;font-size:5.8px;color:#2e2e2e;white-space:nowrap;">IPXRule</div>
<div style="position:absolute;left:85px;top:54.49999999999999px;height:8px;line-height:8px;font-size:5.8px;color:#2e2e2e;white-space:nowrap;">mutant</div>
<div style="position:absolute;left:129px;top:54.49999999999999px;height:8px;line-height:8px;font-size:5.8px;color:#2e2e2e;white-space:nowrap;">IPX</div>
<div style="position:absolute;left:187px;top:54.49999999999999px;height:8px;line-height:8px;font-size:5.8px;color:#2e2e2e;white-space:nowrap;">Failed the Increase on Parameter X rule.</div>
<div style="position:absolute;left:8px;top:62px;width:4px;height:5px;border:1px solid #b0bccb;background:linear-gradient(#ffffff,#c8d8ea);"></div>
<div style="position:absolute;left:23px;top:61.849999999999994px;height:8px;line-height:8px;font-size:5.8px;color:#2e2e2e;white-space:nowrap;">IPYRule</div>
<div style="position:absolute;left:85px;top:61.849999999999994px;height:8px;line-height:8px;font-size:5.8px;color:#2e2e2e;white-space:nowrap;">mutant</div>
<div style="position:absolute;left:129px;top:61.849999999999994px;height:8px;line-height:8px;font-size:5.8px;color:#2e2e2e;white-space:nowrap;">IPY</div>
<div style="position:absolute;left:187px;top:61.849999999999994px;height:8px;line-height:8px;font-size:5.8px;color:#2e2e2e;white-space:nowrap;">Failed the Increase on Parameter Y rule.</div>
<div style="position:absolute;left:8px;top:69px;width:4px;height:5px;border:1px solid #b0bccb;background:linear-gradient(#ffffff,#c8d8ea);"></div>
<div style="position:absolute;left:23px;top:69.19999999999999px;height:8px;line-height:8px;font-size:5.8px;color:#2e2e2e;white-space:nowrap;">IPZRule</div>
<div style="position:absolute;left:85px;top:69.19999999999999px;height:8px;line-height:8px;font-size:5.8px;color:#2e2e2e;white-space:nowrap;">mutant</div>
<div style="position:absolute;left:129px;top:69.19999999999999px;height:8px;line-height:8px;font-size:5.8px;color:#2e2e2e;white-space:nowrap;">IPZ</div>
<div style="position:absolute;left:187px;top:69.19999999999999px;height:8px;line-height:8px;font-size:5.8px;color:#2e2e2e;white-space:nowrap;">Failed the Increase on Parameter Y rule.</div>
<div style="position:absolute;left:8px;top:77px;width:4px;height:5px;border:1px solid #b0bccb;background:linear-gradient(#ffffff,#c8d8ea);"></div>
<svg style="position:absolute;left:8px;top:77px" width="6" height="7" viewBox="0 0 6 7"><path d="M1 4.6 L2.1 5.6 L5 2.6" stroke="#1a1a1a" stroke-width="1.1" fill="none"/></svg>
<div style="position:absolute;left:23px;top:76.54999999999998px;height:8px;line-height:8px;font-size:5.8px;color:#2e2e2e;white-space:nowrap;">matchExpected</div>
<div style="position:absolute;left:85px;top:76.54999999999998px;height:8px;line-height:8px;font-size:5.8px;color:#2e2e2e;white-space:nowrap;">seed</div>
<div style="position:absolute;left:129px;top:76.54999999999998px;height:8px;line-height:8px;font-size:5.8px;color:#2e2e2e;white-space:nowrap;">all</div>
<div style="position:absolute;left:187px;top:76.54999999999998px;height:8px;line-height:8px;font-size:5.8px;color:#2e2e2e;white-space:nowrap;">Does not match the expected output.</div>
<div style="position:absolute;left:8px;top:84px;width:4px;height:5px;border:1px solid #b0bccb;background:linear-gradient(#ffffff,#c8d8ea);"></div>
<div style="position:absolute;left:23px;top:83.89999999999999px;height:8px;line-height:8px;font-size:5.8px;color:#2e2e2e;white-space:nowrap;">NAGToXAssertion</div>
<div style="position:absolute;left:85px;top:83.89999999999999px;height:8px;line-height:8px;font-size:5.8px;color:#2e2e2e;white-space:nowrap;">mutant</div>
<div style="position:absolute;left:129px;top:83.89999999999999px;height:8px;line-height:8px;font-size:5.8px;color:#2e2e2e;white-space:nowrap;">NAGToX</div>
<div style="position:absolute;left:187px;top:83.89999999999999px;height:8px;line-height:8px;font-size:5.8px;color:#2e2e2e;white-space:nowrap;">Failed the Rule: mutant.TriangleType==noneTriangle</div>
<div style="position:absolute;left:8px;top:91px;width:4px;height:5px;border:1px solid #b0bccb;background:linear-gradient(#ffffff,#c8d8ea);"></div>
<div style="position:absolute;left:23px;top:91.24999999999999px;height:8px;line-height:8px;font-size:5.8px;color:#2e2e2e;white-space:nowrap;">NAGToYAssertion</div>
<div style="position:absolute;left:85px;top:91.24999999999999px;height:8px;line-height:8px;font-size:5.8px;color:#2e2e2e;white-space:nowrap;">mutant</div>
<div style="position:absolute;left:129px;top:91.24999999999999px;height:8px;line-height:8px;font-size:5.8px;color:#2e2e2e;white-space:nowrap;">NAGToY</div>
<div style="position:absolute;left:187px;top:91.24999999999999px;height:8px;line-height:8px;font-size:5.8px;color:#2e2e2e;white-space:nowrap;">Failed the Rule: mutant.TriangleType==noneTriangle</div>
</div>
<div style="position:absolute;left:6.6px;top:350px;height:8px;line-height:8px;font-size:5.45px;font-weight:bold;color:#333333;white-space:nowrap;">Test Case Metrics:</div>
<div style="position:absolute;left:6px;top:358px;width:177px;height:43px;border:1px solid #a8b2bd;border-top-color:#c4cbd3;background:#fff;overflow:hidden;">
<div style="position:absolute;left:0px;top:0px;width:177px;height:10px;background:#eeeeee;"></div>
<div style="position:absolute;left:0px;top:10px;width:177px;height:1px;background:#a8b2bd;"></div>
<div style="position:absolute;left:20px;top:0px;width:1px;height:10px;background:#cdd2d8;"></div>
<div style="position:absolute;left:8px;top:2px;width:4px;height:4px;border:1px solid #b0bccb;background:linear-gradient(#ffffff,#c8d8ea);"></div>
<div style="position:absolute;left:-1.0px;width:200px;top:1.0px;height:8px;line-height:8px;text-align:center;font-size:5.8px;color:#383838;white-space:nowrap;"><span style="">Name</span></div>
</div>
<div style="position:absolute;left:185.3px;top:350px;height:8px;line-height:8px;font-size:5.45px;font-weight:bold;color:#333333;white-space:nowrap;">Test Case Filters:</div>
<div style="position:absolute;left:185px;top:358px;width:177px;height:43px;border:1px solid #a8b2bd;border-top-color:#c4cbd3;background:#fff;overflow:hidden;">
<div style="position:absolute;left:0px;top:0px;width:177px;height:10px;background:#eeeeee;"></div>
<div style="position:absolute;left:0px;top:10px;width:177px;height:1px;background:#a8b2bd;"></div>
<div style="position:absolute;left:20px;top:0px;width:1px;height:10px;background:#cdd2d8;"></div>
<div style="position:absolute;left:8px;top:2px;width:4px;height:4px;border:1px solid #b0bccb;background:linear-gradient(#ffffff,#c8d8ea);"></div>
<div style="position:absolute;left:-1.0px;width:200px;top:1.0px;height:8px;line-height:8px;text-align:center;font-size:5.8px;color:#383838;white-space:nowrap;"><span style="">Name</span></div>
</div>
<div style="position:absolute;left:6.6px;top:402px;height:8px;line-height:8px;font-size:5.5px;font-weight:bold;color:#333333;white-space:nowrap;">Test Set Metrics:</div>
<div style="position:absolute;left:6px;top:410px;width:177px;height:43px;border:1px solid #a8b2bd;border-top-color:#c4cbd3;background:#fff;overflow:hidden;">
<div style="position:absolute;left:0px;top:0px;width:177px;height:10px;background:#eeeeee;"></div>
<div style="position:absolute;left:0px;top:10px;width:177px;height:1px;background:#a8b2bd;"></div>
<div style="position:absolute;left:20px;top:0px;width:1px;height:10px;background:#cdd2d8;"></div>
<div style="position:absolute;left:8px;top:2px;width:4px;height:4px;border:1px solid #b0bccb;background:linear-gradient(#ffffff,#c8d8ea);"></div>
<div style="position:absolute;left:-1.0px;width:200px;top:1.0px;height:8px;line-height:8px;text-align:center;font-size:5.8px;color:#383838;white-space:nowrap;"><span style="">Name</span></div>
</div>
<div style="position:absolute;left:185.3px;top:402px;height:8px;line-height:8px;font-size:5.45px;font-weight:bold;color:#333333;white-space:nowrap;">Test Set Filters:</div>
<div style="position:absolute;left:185px;top:410px;width:177px;height:43px;border:1px solid #a8b2bd;border-top-color:#c4cbd3;background:#fff;overflow:hidden;">
<div style="position:absolute;left:0px;top:0px;width:177px;height:10px;background:#eeeeee;"></div>
<div style="position:absolute;left:0px;top:10px;width:177px;height:1px;background:#a8b2bd;"></div>
<div style="position:absolute;left:20px;top:0px;width:1px;height:10px;background:#cdd2d8;"></div>
<div style="position:absolute;left:8px;top:2px;width:4px;height:4px;border:1px solid #b0bccb;background:linear-gradient(#ffffff,#c8d8ea);"></div>
<div style="position:absolute;left:-1.0px;width:200px;top:1.0px;height:8px;line-height:8px;text-align:center;font-size:5.8px;color:#383838;white-space:nowrap;"><span style="">Name</span></div>
</div>
<div style="position:absolute;left:356px;top:161px;width:6px;height:83px;background:#eeeeee;border-left:1px solid #c2c9d1;border-bottom:1px solid #c2c9d1;"></div>
<div style="position:absolute;left:356px;top:161px;width:7px;height:7px;background:#fff;"></div>
<svg style="position:absolute;left:357.5px;top:163.5px" width="4" height="3" viewBox="0 0 4 3"><path d="M0 2.6H4L2 0.3Z" fill="#222"/></svg>
<div style="position:absolute;left:356px;top:238px;width:6px;height:6px;background:#fff;border-left:1px solid #c2c9d1;border-top:1px solid #d5dae0;"></div>
<svg style="position:absolute;left:357.5px;top:240px" width="4" height="3" viewBox="0 0 4 3"><path d="M0 0.4H4L2 2.7Z" fill="#222"/></svg>
<div style="position:absolute;left:356px;top:169px;width:5px;height:46px;border:1px solid #a6bad2;background:linear-gradient(90deg,#ffffff,#c3d4e9);"></div>
<div style="position:absolute;left:358px;top:192px;width:4px;height:1px;background:#a0b4cc;"></div>
<div style="position:absolute;left:356px;top:265px;width:6px;height:83px;background:#eeeeee;border-left:1px solid #c2c9d1;border-bottom:1px solid #c2c9d1;"></div>
<div style="position:absolute;left:356px;top:265px;width:7px;height:7px;background:#fff;"></div>
<svg style="position:absolute;left:357.5px;top:267.5px" width="4" height="3" viewBox="0 0 4 3"><path d="M0 2.6H4L2 0.3Z" fill="#222"/></svg>
<div style="position:absolute;left:356px;top:342px;width:6px;height:6px;background:#fff;border-left:1px solid #c2c9d1;border-top:1px solid #d5dae0;"></div>
<svg style="position:absolute;left:357.5px;top:344px" width="4" height="3" viewBox="0 0 4 3"><path d="M0 0.4H4L2 2.7Z" fill="#222"/></svg>
<div style="position:absolute;left:356px;top:272px;width:5px;height:44px;border:1px solid #a6bad2;background:linear-gradient(90deg,#ffffff,#c3d4e9);"></div>
<div style="position:absolute;left:358px;top:294px;width:4px;height:1px;background:#a0b4cc;"></div>
<div style="position:absolute;left:373px;top:90.3px;height:8px;line-height:8px;font-size:5.5px;font-weight:bold;color:#333333;white-space:nowrap;">Messages:</div>
<div style="position:absolute;left:372.6px;top:97px;width:258.6px;height:173px;border:1px solid #a3adb8;background:#fff;"></div>
<div style="position:absolute;left:373px;top:98px;width:252px;height:167.5px;overflow:hidden;">
<div style="position:absolute;left:0.5px;top:0.40px;height:8px;line-height:8px;font-size:5.8px;color:#333;white-space:nowrap;">Welcome to Morphy Test Runner</div>
<div style="position:absolute;left:0.5px;top:7.72px;height:8px;line-height:8px;font-size:5.8px;color:#333;white-space:nowrap;">Version 1.3: Oct. 27, 2019</div>
<div style="position:absolute;left:0.5px;top:15.04px;height:8px;line-height:8px;font-size:5.8px;color:#333;white-space:nowrap;">Loading Test Specification class morphy.examples.TriangleTest1</div>
<div style="position:absolute;left:0.5px;top:22.36px;height:8px;line-height:8px;font-size:5.8px;color:#333;white-space:nowrap;">Start loading test cases.</div>
<div style="position:absolute;left:0.5px;top:29.68px;height:8px;line-height:8px;font-size:5.8px;color:#333;white-space:nowrap;">-- File: temp.mts</div>
<div style="position:absolute;left:0.5px;top:37.00px;height:8px;line-height:8px;font-size:5.8px;color:#333;white-space:nowrap;transform:scaleX(0.975);transform-origin:0 0;">-- Saved by :Morphy Test Runner, Version:1.3: Oct. 27, 2019,</div>
<div style="position:absolute;left:0.5px;top:44.32px;height:8px;line-height:8px;font-size:5.8px;color:#333;white-space:nowrap;transform:scaleX(0.983);transform-origin:0 0;">-- Date:Tue Oct 29 10:11:36 GMT 2019,</div>
<div style="position:absolute;left:0.5px;top:51.64px;height:8px;line-height:8px;font-size:5.8px;color:#333;white-space:nowrap;">-- Test Spec Class: morphy.examples.TriangleTest1</div>
<div style="position:absolute;left:0.5px;top:58.96px;height:8px;line-height:8px;font-size:5.8px;color:#333;white-space:nowrap;">Finished loading test cases from file temp.mts</div>
<div style="position:absolute;left:0.5px;top:66.28px;height:8px;line-height:8px;font-size:5.8px;color:#333;white-space:nowrap;">== Number of test cases loaded from file: 0</div>
<div style="position:absolute;left:0.5px;top:73.60px;height:8px;line-height:8px;font-size:5.8px;color:#333;white-space:nowrap;">Start making seed test cases.</div>
<div style="position:absolute;left:0.5px;top:80.92px;height:8px;line-height:8px;font-size:5.8px;color:#333;white-space:nowrap;transform:scaleX(0.981);transform-origin:0 0;">-- Making seed test cases by using makeSeedsWithExpectedOutput</div>
<div style="position:absolute;left:0.5px;top:88.24px;height:8px;line-height:8px;font-size:5.8px;color:#333;white-space:nowrap;transform:scaleX(1.036);transform-origin:0 0;">-- 4 test cases generated.</div>
<div style="position:absolute;left:0.5px;top:95.56px;height:8px;line-height:8px;font-size:5.8px;color:#333;white-space:nowrap;transform:scaleX(1.017);transform-origin:0 0;">Finished making seed test cases.</div>
<div style="position:absolute;left:0.5px;top:102.88px;height:8px;line-height:8px;font-size:5.8px;color:#333;white-space:nowrap;">== Total number of test cases in test pool: 4</div>
<div style="position:absolute;left:0.5px;top:110.20px;height:8px;line-height:8px;font-size:5.8px;color:#333;white-space:nowrap;">Start executing on test cases.</div>
<div style="position:absolute;left:0.5px;top:117.52px;height:8px;line-height:8px;font-size:5.8px;color:#333;white-space:nowrap;">Finished test Executions.</div>
<div style="position:absolute;left:0.5px;top:124.84px;height:8px;line-height:8px;font-size:5.8px;color:#333;white-space:nowrap;">== Number of test cases executed: 4</div>
<div style="position:absolute;left:0.5px;top:132.16px;height:8px;line-height:8px;font-size:5.8px;color:#333;white-space:nowrap;">== Number of test cases crashed: 0</div>
<div style="position:absolute;left:0.5px;top:139.48px;height:8px;line-height:8px;font-size:5.8px;color:#333;white-space:nowrap;">Start checking test result correctness.</div>
<div style="position:absolute;left:0.5px;top:146.80px;height:8px;line-height:8px;font-size:5.8px;color:#333;white-space:nowrap;">-- Checking using metamorphism matchExpected</div>
<div style="position:absolute;left:0.5px;top:154.12px;height:8px;line-height:8px;font-size:5.8px;color:#333;white-space:nowrap;">-- Finished checking on metamorphism matchExpected</div>
<div style="position:absolute;left:0.5px;top:161.44px;height:8px;line-height:8px;font-size:5.8px;color:#333;white-space:nowrap;">== Total number of tests: 4</div>
</div>
<div style="position:absolute;left:625px;top:98px;width:6px;height:166px;background:#eeeeee;border-left:1px solid #c2c9d1;border-bottom:1px solid #c2c9d1;"></div>
<div style="position:absolute;left:625px;top:98px;width:7px;height:7px;background:#fff;"></div>
<svg style="position:absolute;left:626.5px;top:100.5px" width="4" height="3" viewBox="0 0 4 3"><path d="M0 2.6H4L2 0.3Z" fill="#222"/></svg>
<div style="position:absolute;left:625px;top:258px;width:6px;height:6px;background:#fff;border-left:1px solid #c2c9d1;border-top:1px solid #d5dae0;"></div>
<svg style="position:absolute;left:626.5px;top:260px" width="4" height="3" viewBox="0 0 4 3"><path d="M0 0.4H4L2 2.7Z" fill="#222"/></svg>
<div style="position:absolute;left:625px;top:105px;width:5px;height:122px;border:1px solid #a6bad2;background:linear-gradient(90deg,#ffffff,#c3d4e9);"></div>
<div style="position:absolute;left:627px;top:166px;width:4px;height:1px;background:#a0b4cc;"></div>
<div style="position:absolute;left:373px;top:265px;width:252px;height:6px;background:#eeeeee;"></div>
<div style="position:absolute;left:373px;top:265px;width:7px;height:6px;background:#fff;"></div>
<svg style="position:absolute;left:375px;top:266px" width="3" height="4" viewBox="0 0 3 4"><path d="M2.6 0V4L0.3 2Z" fill="#222"/></svg>
<div style="position:absolute;left:618px;top:265px;width:6px;height:5px;background:#fff;border:1px solid #c2c9d1;border-right:none;"></div>
<svg style="position:absolute;left:620px;top:266px" width="3" height="4" viewBox="0 0 3 4"><path d="M0.4 0V4L2.7 2Z" fill="#222"/></svg>
<div style="position:absolute;left:380px;top:265px;width:236px;height:4px;border:1px solid #a6bad2;background:linear-gradient(#ffffff,#c3d4e9);"></div>
<div style="position:absolute;left:498px;top:267px;width:1px;height:3px;background:#a0b4cc;"></div>
<div style="position:absolute;left:625px;top:265px;width:6px;height:5px;background:#eeeeee;border:1px solid #c2c9d1;"></div>
<div style="position:absolute;left:373px;top:272.8px;height:8px;line-height:8px;font-size:5.5px;font-weight:bold;color:#333333;white-space:nowrap;">Test Error Report:</div>
<div style="position:absolute;left:373px;top:280px;width:258px;height:173px;border:1px solid #a3adb8;background:#fff;"></div></div></body></html>
